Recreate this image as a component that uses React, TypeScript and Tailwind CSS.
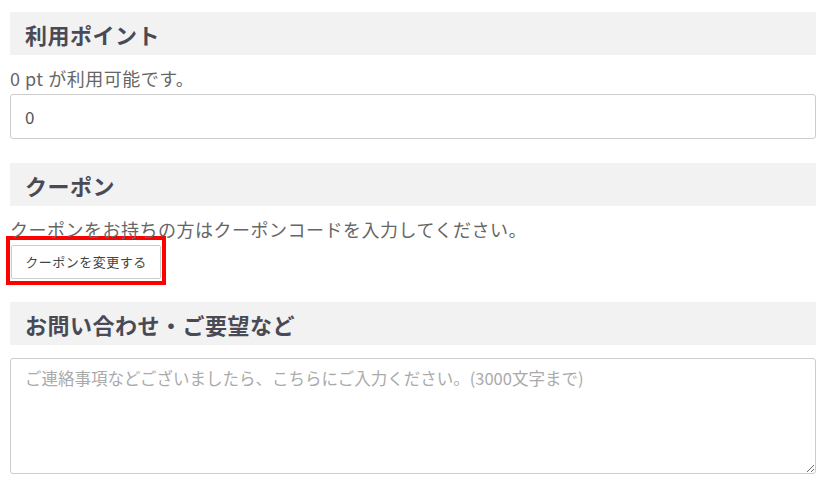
import { useState } from "react";

const font = { fontFamily: '"Noto Sans CJK JP", "Noto Sans", sans-serif' };

function SectionTitle({ children }: { children: React.ReactNode }) {
    return (
        <h2 className="h-[43px] bg-[#f2f2f2] pl-[15px] flex items-center text-[22px] tracking-[0.5px] font-bold text-[#4a4a56] leading-none">
            {children}
        </h2>
    )
}

export default function App() {
    const [points, setPoints] = useState("0");
    const [note, setNote] = useState("");

    return (
        <div className="w-[837px] h-[485px] bg-white overflow-hidden" style={font}>
            <div className="w-[806px] ml-[10px] pt-[12px]">
                <SectionTitle>利用ポイント</SectionTitle>
                <p className="mt-[12px] text-[18px] tracking-[0.5px] leading-[22px] text-[#666]">0 pt が利用可能です。</p>
                <input
                    value={points}
                    onChange={(e) => setPoints(e.target.value)}
                    className="mt-[5px] block w-full h-[45px] border border-[#ccc] rounded-[3px] px-[14px] text-[17px] text-[#555] outline-none"
                />

                <div className="mt-[24px]">
                    <SectionTitle>クーポン</SectionTitle>
                </div>
                <p className="mt-[13px] text-[18px] tracking-[0.5px] leading-[20px] text-[#666]">クーポンをお持ちの方はクーポンコードを入力してください。</p>
                <div className="mt-[-3px] ml-[-4px] w-fit border-4 border-[#ff0000] pt-[5px] px-[1px] pb-[2px]">
                    <button className="block w-[150px] h-[34px] bg-white border border-[#ccc] rounded-[2px] text-[13px] text-[#444] tracking-[0.5px]">
                        クーポンを変更する
                    </button>
                </div>

                <div className="mt-[17px]">
                    <SectionTitle>お問い合わせ・ご要望など</SectionTitle>
                </div>
                <textarea
                    value={note}
                    onChange={(e) => setNote(e.target.value)}
                    placeholder="ご連絡事項などございましたら、こちらにご入力ください。(3000文字まで)"
                    className="mt-[13px] block w-full h-[116px] border border-[#ccc] rounded-[3px] px-[14px] py-[8px] text-[16.5px] leading-[22px] text-[#555] placeholder:text-[#aaa] outline-none"
                />
            </div>
        </div>
    )
}
